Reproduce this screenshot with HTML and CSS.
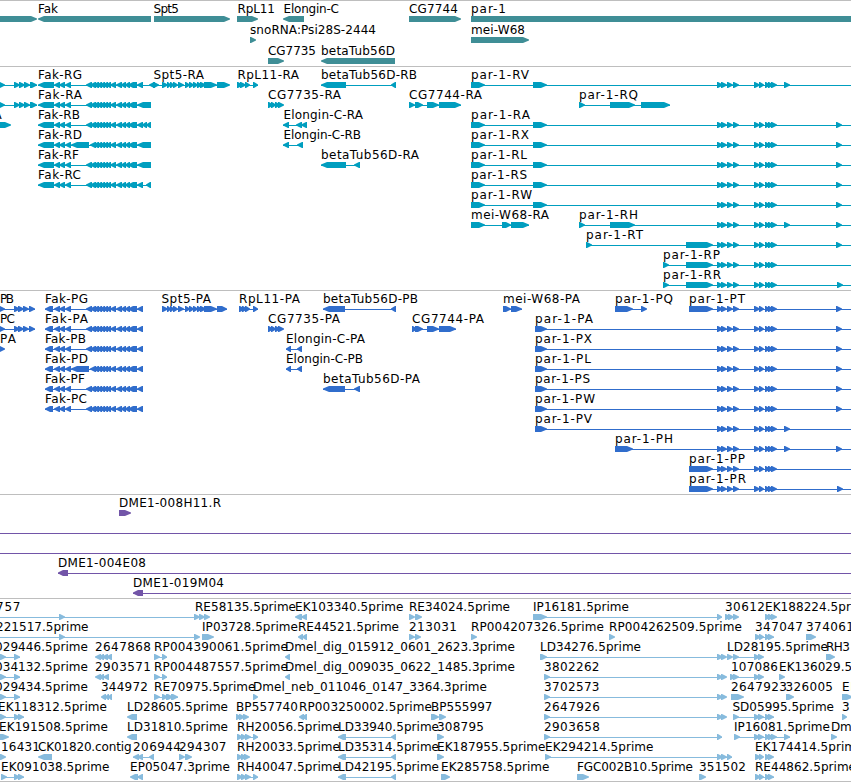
FILE: index.html
```html
<!DOCTYPE html>
<html lang="en">
<head>
<meta charset="utf-8">
<title>Genome map</title>
<link rel="stylesheet" href="styles.css">
</head>
<body>
<main class="map">
  <section class="track track-gene" id="genes"></section>
  <section class="track track-transcript" id="transcripts"></section>
  <section class="track track-protein" id="proteins"></section>
  <section class="track track-clone" id="clones"></section>
  <section class="track track-est" id="ests"></section>
</main>
<script src="map.js"></script>
</body>
</html>
```
FILE: styles.css
```css
body {
  margin: 0;
  background: #fff;
}
.map {
  display: flex;
  flex-direction: column;
  width: 851px;
  height: 782px;
  overflow: hidden;
}
.track {
  box-sizing: border-box;
  border-top: 1px solid #bebebe;
  overflow: hidden;
}
.track svg {
  display: block;
  width: 100%;
  height: 100%;
}
.track text {
  font: 12px "DejaVu Sans", sans-serif;
  fill: #000;
}
.track rect {
  shape-rendering: crispEdges;
}
.track-gene { height: 66px; fill: #3f8e96; }
.track-transcript { height: 224px; fill: #009ebf; }
.track-protein { height: 204px; fill: #306dcc; }
.track-clone { height: 104px; fill: #7255a8; }
.track-est { height: 184px; fill: #87bbdd; border-bottom: 1px solid #bebebe; }
```
FILE: map.js
```js
// A feature is [row, label, labelStart, labelEnd, line, direction, exons].
// Exons are written "start-end start-end"; a line is [start, end] or 0.
const G = ' 717-723 721-727 727-733 733-739 754-760 759-764 765-770 768-773 771-777';
const mid = ' 54-60 59-65 65-71 ';
const run = '90-96 93-99 97-102 100-105 103-108 106-111 110-116 116-122 121-126 125-130 128-137 ';
const spt = '162-168 167-171 170-174 173-178 178-184 185-190 189-194 193-198 197-202 200-206 204-217 ';

const genes = [
  [0, '', 0, 0, 0, '>', '-20-37'],
  [0, 'Fak', 38, 58, 0, '<', '38-151'],
  [0, 'Spt5', 153.5, 179, 0, '>', '154-230'],
  [0, 'RpL11', 237.5, 275, 0, '>', '237-258'],
  [0, 'Elongin-C', 283.5, 339, 0, '<', '283-304'],
  [0, 'CG7744', 409, 458, 0, '>', '409-461'],
  [0, 'par-1', 471, 506, 0, '>', '471-900'],
  [1, 'snoRNA:Psi28S-2444', 250, 376, 0, '>', '250-256'],
  [1, 'mei-W68', 471, 525, 0, '>', '471-529'],
  [2, 'CG7735', 268, 316, 0, '>', '268-284'],
  [2, 'betaTub56D', 321, 395, 0, '<', '321-395']
];

const transcripts = [
  [0, '', 0, 0, [0, 37], '>', '-2-5 14-20 19-25 24-30 30-37'],
  [1, '', 0, 0, [0, 37], '>', '-2-5 14-20 19-25 24-30 30-37'],
  [2, 'A', -6.5, 1.5, 0, '>', '-10-11'],
  [0, 'Fak-RG', 38, 82, [38, 153], '<', '38-54' + mid + '86-92 ' + run + '137-143 149-155'],
  [1, 'Fak-RA', 38, 82, [38, 151], '<', '38-54' + mid + '86-92 ' + run + '137-151'],
  [2, 'Fak-RB', 38, 80, [38, 151], '<', '38-54' + mid + '86-92 ' + run + '137-143 142-147 146-151'],
  [3, 'Fak-RD', 38, 82, [38, 151], '<', '38-54' + mid + '71-89 ' + run + '137-151'],
  [4, 'Fak-RF', 38, 79, [38, 151], '<', '38-54' + mid + '86-92 ' + run + '137-151'],
  [5, 'Fak-RC', 38, 81, [38, 151], '<', '38-54' + mid + '86-92 ' + run + '137-143 146-151'],
  [0, 'Spt5-RA', 153.5, 204, [153, 229], '>', '153-159 ' + spt + '217-230'],
  [0, 'RpL11-RA', 237.5, 299, [237, 258], '>', '237-243 240-246 245-250 253-258'],
  [0, 'betaTub56D-RB', 321, 417, [321, 396], '<', '321-346 391-396'],
  [0, 'par-1-RV', 471, 529, [471, 851], '>', '471-485 533-547' + G + ' 784-790'],
  [1, 'CG7735-RA', 268, 341, 0, '>', '268-273 271-276 275-280 278-284'],
  [1, 'CG7744-RA', 409, 482, [409, 461], '>', '409-415 415-423 427-439 439-461'],
  [1, 'par-1-RQ', 579, 638, [579, 670], '>', '579-585 610-635 641-670'],
  [2, 'Elongin-C-RA', 283.5, 363, [283, 307], '<', '283-289 296-302 301-307'],
  [3, 'Elongin-C-RB', 283.5, 361, [283, 303], '<', '283-289 297-303'],
  [4, 'betaTub56D-RA', 321, 419, [321, 360], '<', '321-346 354-360'],
  [2, 'par-1-RA', 471, 530, [471, 851], '>', '471-485 533-547' + G + ' 836-842'],
  [3, 'par-1-RX', 471, 529, [471, 851], '>', '471-485 533-547' + G + ' 836-842'],
  [4, 'par-1-RL', 471, 527, [471, 851], '>', '471-485 533-547' + G + ' 836-842'],
  [5, 'par-1-RS', 471, 527, [471, 851], '>', '471-485 533-547' + G + ' 836-842'],
  [6, 'par-1-RW', 471, 532, [471, 851], '>', '471-485 533-547' + G + ' 836-842'],
  [7, 'mei-W68-RA', 471, 549, [471, 529], '>', '471-485 502-511 511-529'],
  [7, 'par-1-RH', 579, 638, [579, 851], '>', '579-585 610-635' + G + ' 784-790 836-842'],
  [8, 'par-1-RT', 586, 643, [586, 851], '>', '586-592 686-713' + G + ' 836-842'],
  [9, 'par-1-RP', 663, 720, [663, 851], '>', '663-669 686-713' + G],
  [10, 'par-1-RR', 663, 721, [663, 851], '>', '663-669 686-713' + G + ' 837-843']
];

const proteins = [
  [0, 'PB', 0, 14, [0, 35], '>', '-2-5 14-20 18-24 23-29 29-35'],
  [1, 'PC', 0, 15, [0, 35], '>', '-2-5 14-20 18-24 23-29 29-35'],
  [2, 'PA', 0, 16, 0, '>', '-2-5'],
  [0, 'Spt5-PA', 161.5, 211, [162, 227], '>', spt + '217-227'],
  [0, 'RpL11-PA', 239, 300, [239, 258], '>', '239-245 242-247 245-250 253-258'],
  [0, 'betaTub56D-PB', 323, 418, [323, 396], '<', '323-345 391-396'],
  [0, 'mei-W68-PA', 503, 580, [503, 522], '>', '503-511 511-522'],
  [0, 'par-1-PQ', 615, 673, [615, 646], '>', '615-633 641-647'],
  [0, 'par-1-PT', 689, 745, [689, 851], '>', '689-713' + G + ' 836-842'],
  [1, 'CG7735-PA', 268, 340, 0, '>', '268-273 271-276 275-280 278-284'],
  [1, 'CG7744-PA', 412, 484, [412, 456], '>', '412-417 415-423 427-439 439-456'],
  [2, 'Elongin-C-PA', 286, 365, [286, 302], '<', '286-291 297-302'],
  [3, 'Elongin-C-PB', 286, 363, [286, 302], '<', '286-291 297-302'],
  [4, 'betaTub56D-PA', 323, 420, [323, 360], '<', '323-345 354-360'],
  [7, 'par-1-PH', 615, 673, [615, 851], '>', '615-633' + G + ' 784-790 836-842'],
  [8, 'par-1-PP', 689, 745, [689, 851], '>', '689-713' + G],
  [9, 'par-1-PR', 689, 746, [689, 851], '>', '689-713' + G + ' 837-843']
];
[['G', 88], ['A', 88], ['B', 86], ['D', 88], ['F', 85], ['C', 87]].forEach(([c, end], row) => {
  proteins.push([row, 'Fak-P' + c, 45, end, [45, 143], '<', '45-53' + mid + (c === 'D' ? '71-89 ' : '86-92 ') + run + '137-143']);
});
[['A', 593], ['X', 592], ['L', 591], ['S', 590], ['W', 595], ['V', 592]].forEach(([c, end], i) => {
  proteins.push([i + 1, 'par-1-P' + c, 535, end, [535, 851], '>', '535-547' + G + (c === 'V' ? ' 784-790' : ' 836-842')]);
});

const clones = [
  [0, 'DME1-008H11.R', 119, 221, 0, '>', '119-131'],
  [1, '', 0, 0, [0, 851], '>', ''],
  [2, '', 0, 0, [0, 851], '>', ''],
  [3, 'DME1-004E08', 58, 146, [58, 851], '<', '58-68'],
  [4, 'DME1-019M04', 133, 224, [133, 851], '<', '133-143']
];

const ests = [
  [0, '757', -4, 20.5, [0, 199], '>', '59-65 194-200'],
  [0, 'RE58135.5prime', 195, 296, 0, '>', '199-205 204-210'],
  [0, 'EK103340.5prime', 295, 403.5, 0, '<', '295-302 301-307'],
  [0, 'RE34024.5prime', 409, 510, 0, '>', '409-415 415-422'],
  [0, 'IP16181.5prime', 533, 629, [533, 722], '>', '533-547 717-722'],
  [0, '30612', 725, 765, 0, '>', '725-731 728-734 733-739'],
  [0, 'EK188224.5prime', 765, 873.5, 0, '>', '765-771 768-774 771-777'],
  [1, '221517.5prime', -4, 88.5, [0, 199], '>', '59-65 194-200'],
  [1, 'IP03728.5prime', 202, 298, 0, '>', '202-214'],
  [1, 'RE44521.5prime', 298, 399, 0, '<', '298-303 302-307'],
  [1, '213031', 409, 457, [409, 420], '>', '409-415 415-421'],
  [1, 'RP004207326.5prime', 471, 604, 0, '>', '471-477'],
  [1, 'RP004262509.5prime', 609, 742, 0, '>', '609-615'],
  [1, '347047', 755, 803, [755, 774], '>', '755-761 759-764 765-771 768-774'],
  [1, '374061', 806, 854, 0, '>', '806-816'],
  [2, '029446.5prime', -5, 88, [0, 20], '>', '-1-6 14-20'],
  [2, '2647868', 95, 151, 0, '<', '95-101 99-104 102-108 106-112'],
  [2, 'RP004390061.5prime', 154, 288, [154, 167], '>', '154-160 162-167'],
  [2, 'Dmel_dig_015912_0601_2623.3prime', 285, 515, 0, '<', '285-290'],
  [2, 'LD34276.5prime', 540, 641, [540, 726], '>', '540-547 717-723 721-727'],
  [2, 'LD28195.5prime', 727, 828, [733, 762], '>', '727-733 733-739 754-760 758-764'],
  [2, 'RH3', 826, 850, 0, '>', '826-835'],
  [3, '034132.5prime', -5, 88, [0, 20], '>', '-1-6 14-20'],
  [3, '2903571', 95, 151, 0, '<', '95-101 99-104 103-109'],
  [3, 'RP004487557.5prime', 154, 288, [154, 167], '>', '154-160 162-167'],
  [3, 'Dmel_dig_009035_0622_1485.3prime', 285, 515, 0, '<', '285-290'],
  [3, '3802262', 544, 599.5, [544, 726], '>', '544-550 717-723 721-727'],
  [3, '107086', 731, 778, [733, 762], '>', '730-736 733-739 754-760 758-764'],
  [3, 'EK136029.5prime', 779, 887.5, 0, '>', '779-785'],
  [4, '029434.5prime', -5, 88, [0, 20], '>', '-1-6 14-20'],
  [4, '344972', 101, 148, 0, '<', '101-106 105-109 108-112'],
  [4, 'RE70975.5prime', 154, 255.5, [154, 178], '>', '154-160 162-168 166-173 171-178'],
  [4, 'Dmel_neb_011046_0147_3364.3prime', 253, 487, 0, '>', '253-258'],
  [4, '3702573', 544, 599.5, [544, 726], '>', '544-550 717-723 721-727'],
  [4, '2647923', 731, 787, 0, '>', '731-744'],
  [4, '326005', 785.5, 833, 0, '>', '786-794'],
  [4, 'EK', 842, 858, 0, '>', '842-853'],
  [5, 'EK118312.5prime', -2, 107, [0, 24], '>', '-1-6 14-20 18-24'],
  [5, 'LD28605.5prime', 127, 228, 0, '<', '127-137'],
  [5, 'BP557740', 236, 298, 0, '>', '236-241 239-245 243-249'],
  [5, 'RP003250002.5prime', 299, 432, 0, '<', '299-304 302-307'],
  [5, 'BP555997', 431, 492.5, 0, '>', '431-439 439-446'],
  [5, '2647926', 544, 600, [544, 726], '>', '544-550 717-723 721-727'],
  [5, 'SD05995.5prime', 732.5, 834, [733, 774], '>', '733-739 754-760 758-764 765-771 768-774'],
  [5, '3', 842, 850, 0, '>', '842-847'],
  [6, 'EK191508.5prime', -1, 108, 0, '>', '-3-9'],
  [6, 'LD31810.5prime', 127, 228, 0, '<', '127-137'],
  [6, 'RH20056.5prime', 237, 340, [237, 258], '>', '237-243 241-247 245-251 253-258'],
  [6, 'LD33940.5prime', 338, 439, [338, 396], '<', '338-346 391-396'],
  [6, '308795', 437, 484, 0, '>', '437-444'],
  [6, '2903658', 544, 600, [544, 722], '>', '544-550 717-722'],
  [6, 'IP16081.5prime', 734, 830, [734, 790], '>', '734-740 754-760 758-764 765-771 768-774 771-777 784-790'],
  [6, 'Dmel', 831, 862, 0, '>', '831-837'],
  [7, '16431', 1, 40, 0, '>', '-3-6'],
  [7, 'CK01820.contig', 38, 131.5, 0, '<', '38-52'],
  [7, '206944', 133, 181, [133, 154], '<', '133-139 137-143 149-154'],
  [7, '294307', 179, 226.5, 0, '>', '179-185 185-192'],
  [7, 'RH20033.5prime', 237, 340, 0, '>', '237-243 241-247 244-250'],
  [7, 'LD35314.5prime', 338, 439, [338, 396], '<', '338-346 391-396'],
  [7, 'EK187955.5prime', 437, 545.5, 0, '>', '437-444'],
  [7, 'EK294214.5prime', 545, 653.5, [545, 732], '>', '545-551 717-723 721-727 727-732'],
  [7, 'EK174414.5prime', 755, 863.5, 0, '>', '755-761 759-764 765-771 768-774'],
  [8, 'EK091038.5prime', 1, 109.5, [1, 24], '>', '1-7 14-20 18-24'],
  [8, 'EP05047.3prime', 130, 230, 0, '<', '130-138 137-143'],
  [8, 'RH40047.5prime', 237, 340, [237, 258], '>', '237-243 241-247 245-251 253-258'],
  [8, 'LD42195.5prime', 338, 439, [338, 396], '<', '338-346 391-396'],
  [8, 'EK285758.5prime', 441, 549.5, 0, '>', '441-450'],
  [8, 'FGC002B10.5prime', 577, 693, 0, '>', '577-589'],
  [8, '351502', 699, 746, 0, '>', '699-706'],
  [8, 'RE44862.5prime', 755, 856, [755, 774], '>', '755-761 759-764 765-771 768-774']
];

function exon(a, b, y, dir) {
  const head = Math.min(b - a, b - a > 10 ? 7 : 6);
  const [back, neck, tip] = dir === '>' ? [a, b - head, b] : [b, a + head, a];
  const shoulder = neck + (dir === '>' ? 1 : -1);
  return `<polygon points="${back},${y} ${shoulder},${y} ${tip},${y + 2.5} ${tip},${y + 3.5} ${shoulder},${y + 6} ${back},${y + 6}"/>`;
}

function draw(id, features, pitch) {
  let shapes = '', labels = '';
  for (const [row, label, x, end, line, dir, exons] of features) {
    const top = row * pitch;
    if (line) shapes += `<rect x="${line[0]}" y="${top + 18}" width="${line[1] - line[0]}" height="1"/>`;
    for (const m of exons.matchAll(/(-?\d+)-(\d+)/g)) shapes += exon(+m[1], +m[2], top + 15, dir);
    if (label) labels += `<text x="${x}" y="${top + 12}" textLength="${end - x}">${label}</text>`;
  }
  document.getElementById(id).innerHTML = `<svg>${shapes}${labels}</svg>`;
}

draw('genes', genes, 21);
draw('transcripts', transcripts, 20);
draw('proteins', proteins, 20);
draw('clones', clones, 20);
draw('ests', ests, 20);
```
